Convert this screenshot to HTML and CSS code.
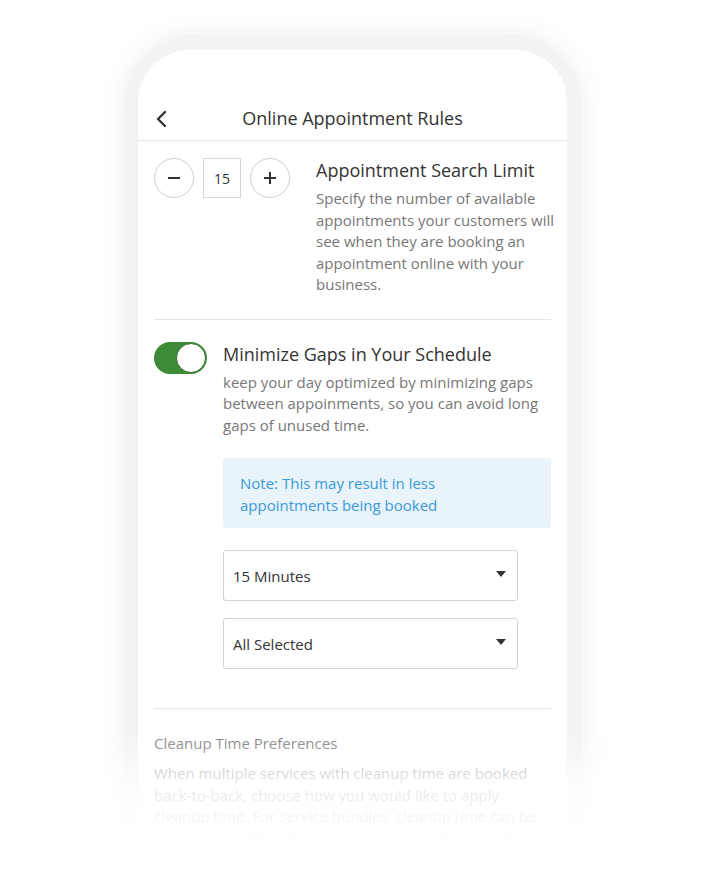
FILE: index.html
```html
<!DOCTYPE html>
<html lang="en">
  <head>
    <meta charset="UTF-8" />
    <meta name="viewport" content="width=device-width, initial-scale=1.0"/>
    <title>Online Appointment Rules</title>
    <link rel="stylesheet" href="styles.css">
  </head>
  <body>
    <div class="phone">
      <div class="screen">
        <div class="header">
          <svg class="back" width="12" height="18" viewBox="0 0 12 18">
            <path d="M10 2 L3 9 L10 16" fill="none" stroke="#333" stroke-width="2.4" stroke-linecap="round" stroke-linejoin="round"/>
          </svg>
          <div class="header-title">Online Appointment Rules</div>
        </div>

        <div class="content">
          <div class="section search-limit">
            <div class="stepper">
              <button class="step-btn">
                <svg width="16" height="16" viewBox="0 0 16 16"><path d="M2 8 H14" stroke="#333" stroke-width="2"/></svg>
              </button>
              <div class="step-value">15</div>
              <button class="step-btn">
                <svg width="16" height="16" viewBox="0 0 16 16"><path d="M2 8 H14 M8 2 V14" stroke="#333" stroke-width="2"/></svg>
              </button>
            </div>
            <div class="text-block">
              <div class="title">Appointment Search Limit</div>
              <div class="desc">Specify the number of available appointments your customers will see when they are booking an appointment online with your business.</div>
            </div>
          </div>

          <div class="section gaps">
            <div class="toggle"><div class="knob"></div></div>
            <div class="text-block">
              <div class="title">Minimize Gaps in Your Schedule</div>
              <div class="desc">keep your day optimized by minimizing gaps between appoinments, so you can avoid long gaps of unused time.</div>
              <div class="note">Note: This may result in less<br>appointments being booked</div>
              <div class="select">
                <span>15 Minutes</span>
                <span class="caret"></span>
              </div>
              <div class="select">
                <span>All Selected</span>
                <span class="caret"></span>
              </div>
            </div>
          </div>

          <div class="section cleanup">
            <div class="sub-title">Cleanup Time Preferences</div>
            <div class="cleanup-desc">When multiple services with cleanup time are booked back-to-back, choose how you would like to apply cleanup time. For service bundles, cleanup time can be customized within the service menu. Applies to in-house appointments only.</div>
          </div>
        </div>
      </div>
    </div>
    <div class="fade"></div>
  </body>
</html>
```

FILE: styles.css
```css
html, body {
  margin: 0;
  height: 880px;
  overflow: hidden;
}

body {
  font-family: "Open Sans", Arial, sans-serif;
  background: #fff;
  color: #333;
}

.phone {
  width: 429px;
  height: 900px;
  margin: 34px 0 0 124px;
  padding: 16px 15px 0 14px;
  background: #f3f3f3;
  border-radius: 72px 72px 0 0;
  box-shadow: 0 0 28px rgba(0, 0, 0, 0.07);
}

.screen {
  height: 100%;
  background: #fff;
  border-radius: 52px 52px 0 0;
}

.header {
  height: 91px;
  display: flex;
  align-items: flex-end;
  justify-content: center;
  border-bottom: 1px solid #e6e6e6;
  position: relative;
  box-sizing: border-box;
  padding-bottom: 10px;
}

.back {
  position: absolute;
  left: 17px;
  bottom: 12px;
}

.header-title {
  font-size: 18px;
  line-height: 24px;
  color: #333;
}

.content {
  padding: 0 16px;
}

.section {
  display: flex;
  border-bottom: 1px solid #e6e6e6;
}

.search-limit {
  padding: 17px 0 23px;
}

.search-limit .text-block {
  margin-right: -6px;
}

.stepper {
  display: flex;
  gap: 9px;
  margin-right: 26px;
}

.step-btn {
  width: 40px;
  height: 40px;
  border: 1px solid #cfcfcf;
  border-radius: 50%;
  background: #fff;
  padding: 0;
  display: flex;
  align-items: center;
  justify-content: center;
}

.step-value {
  width: 38px;
  height: 40px;
  box-sizing: border-box;
  border: 1px solid #d6d6d6;
  display: flex;
  align-items: center;
  justify-content: center;
  font-size: 14px;
  color: #333;
}

.text-block {
  flex: 1;
}

.title {
  font-size: 18px;
  line-height: 24px;
  color: #333;
}

.desc {
  margin-top: 6px;
  font-size: 15px;
  line-height: 21.5px;
  color: #777;
}

.gaps {
  padding: 22px 0 39px;
}

.toggle {
  width: 53px;
  height: 32px;
  box-sizing: border-box;
  background: #3d8a37;
  border-radius: 16px;
  padding: 1px;
  display: flex;
  justify-content: flex-end;
  margin-right: 16px;
  flex-shrink: 0;
}

.knob {
  width: 30px;
  height: 30px;
  box-sizing: border-box;
  background: #fff;
  border: 1px solid #2f6f2a;
  border-radius: 50%;
}

.note {
  margin-top: 22px;
  padding: 14px 17px 12px;
  background: #e8f3fa;
  border-radius: 3px;
  color: #3b9ad9;
  font-size: 15px;
  line-height: 22px;
}

.select {
  width: 295px;
  height: 51px;
  box-sizing: border-box;
  margin-top: 22px;
  border: 1px solid #d4d4d4;
  border-radius: 3px;
  display: flex;
  align-items: center;
  justify-content: space-between;
  padding: 0 11px 0 9px;
  font-size: 15px;
  color: #333;
}

.select + .select {
  margin-top: 17px;
}

.caret {
  width: 0;
  height: 0;
  border-left: 5px solid transparent;
  border-right: 5px solid transparent;
  border-top: 6px solid #333;
  margin-bottom: 3px;
}

.cleanup {
  display: block;
  border-bottom: none;
  padding-top: 23px;
}

.sub-title {
  font-size: 15px;
  line-height: 22px;
  color: #777;
}

.cleanup-desc {
  margin-top: 9px;
  font-size: 15px;
  line-height: 21.5px;
  color: #999;
}

.fade {
  position: fixed;
  left: 0;
  right: 0;
  bottom: 0;
  height: 150px;
  background: linear-gradient(to bottom, rgba(255, 255, 255, 0) 0%, rgba(255, 255, 255, 0.75) 35%, #fff 75%);
}
```
